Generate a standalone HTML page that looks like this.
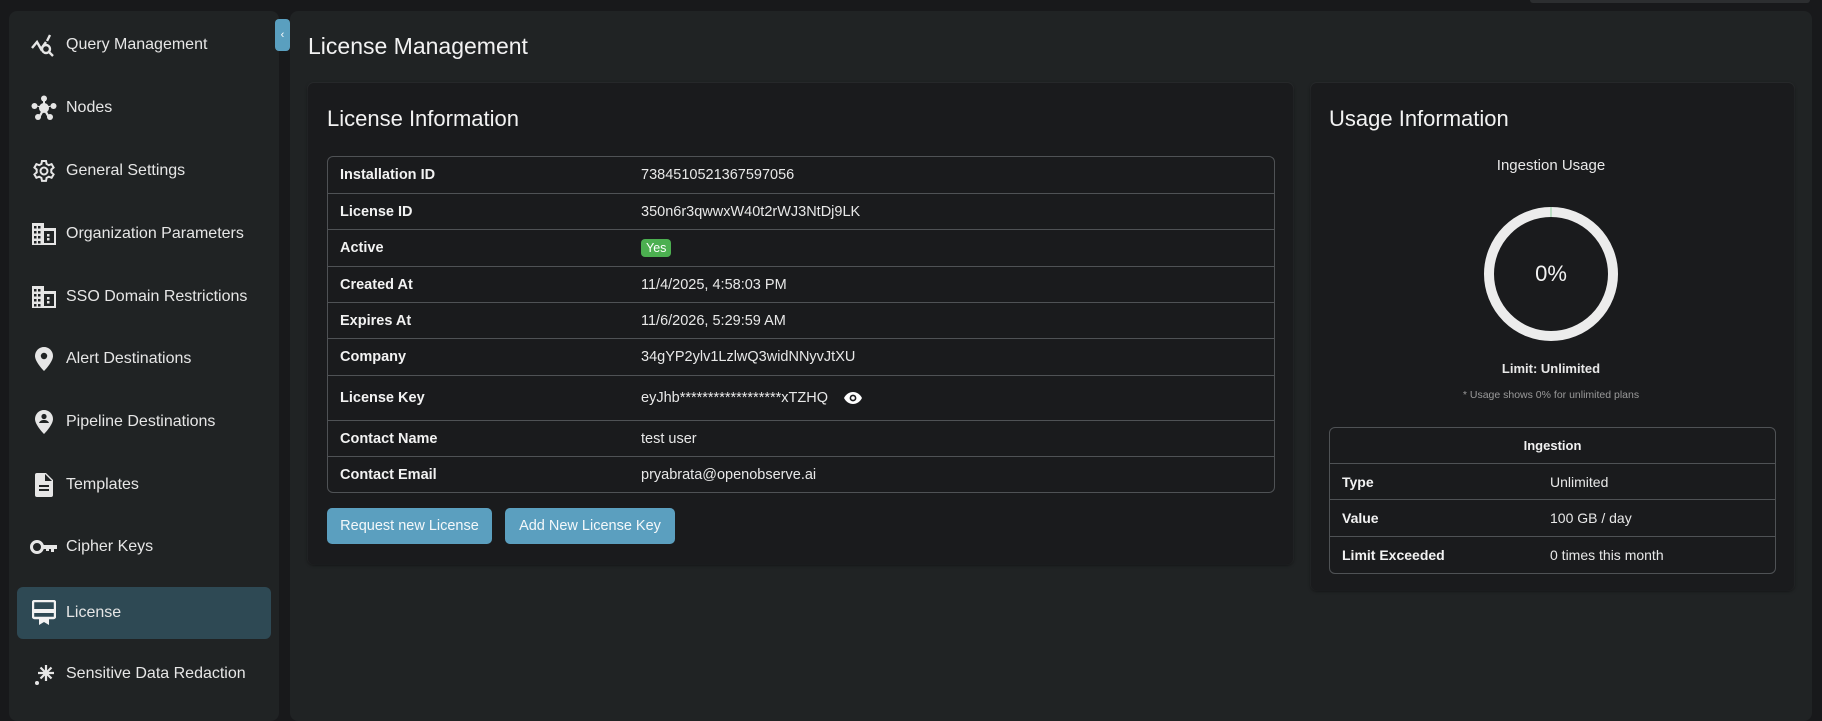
<!DOCTYPE html>
<html><head><meta charset="utf-8"><style>
*{box-sizing:border-box;margin:0;padding:0}
body{width:1822px;height:714px;background:#18191b;font-family:"Liberation Sans",sans-serif;color:#e8e8e8;position:relative;overflow:hidden}
.abs{position:absolute}
.side{left:9px;top:11px;width:270px;height:710px;background:#202324;border-radius:8px}
.item{position:absolute;left:8px;width:254px;height:52px;display:flex;align-items:center;font-size:16px;color:#e6e6e6}
.item .ic{width:30px;height:30px;margin-left:12px;margin-right:7px;display:flex;align-items:center;justify-content:center}
.item.act{background:#2e4954;border-radius:6px}
.main{left:290px;top:11px;width:1522px;height:710px;background:#202324;border-radius:8px}
.card{background:#1a1b1d;border-radius:6px;box-shadow:0 1px 3px rgba(0,0,0,.6),0 0 0 1px #2b2d2f}
table{border-collapse:separate;border-spacing:0;border:1px solid #4f5255;border-radius:6px;width:100%;font-size:14.5px}
td{border-top:1px solid #4f5255;padding:0 12px}
tr:first-child td{border-top:none}
td.l{font-weight:bold;color:#f2f2f2}
.btn{position:absolute;top:508px;height:36px;background:#5b9fbf;color:#f4f8fa;border-radius:5px;font-size:14.5px;display:flex;align-items:center;justify-content:center}
</style></head><body>
<div class="abs" style="left:1530px;top:0;width:280px;height:3px;background:#2c2e30;border-radius:0 0 4px 4px"></div>
<div class="abs side">
 <div class="item" style="top:8px"><div class="ic"><svg width="28" height="24" viewBox="0 0 28 24" fill="none" stroke="#e6e6e6" stroke-width="2.4"><path d="M2 15l5-6 4 7 5-7"/><path d="M20 2l-3 6"/><circle cx="16" cy="16" r="4"/><path d="M19 19l4 4"/></svg></div>Query Management</div>
 <div class="item" style="top:71px"><div class="ic"><svg width="26" height="26" viewBox="0 0 26 26" fill="#e6e6e6"><circle cx="13" cy="13" r="5"/><circle cx="13" cy="3.5" r="3"/><circle cx="3.5" cy="11" r="3"/><circle cx="22.5" cy="11" r="3"/><circle cx="7" cy="22" r="3"/><circle cx="19" cy="22" r="3"/><path d="M12 3h2v8h-2zM3 10l10 2-1 2zM23 10l-10 2 1 2zM7 22l5-9 2 1-5 9zM19 22l-5-9-2 1 5 9z"/></svg></div>Nodes</div>
 <div class="item" style="top:134px"><div class="ic"><svg width="24" height="24" viewBox="0 0 24 24" fill="none" stroke="#e6e6e6" stroke-width="2"><circle cx="12" cy="12" r="3.5"/><path d="M10 2h4l.6 3 2.2 1.2 2.8-1.1 2 3.4-2.3 2v2.9l2.3 2-2 3.4-2.8-1.1-2.2 1.2-.6 3h-4l-.6-3-2.2-1.2-2.8 1.1-2-3.4 2.3-2v-2.9l-2.3-2 2-3.4 2.8 1.1L9.4 5z"/></svg></div>General Settings</div>
 <div class="item" style="top:197px"><div class="ic"><svg width="24" height="22" viewBox="0 0 24 22" fill="#e6e6e6"><path d="M0 0h12v5h12v17H0z"/><g fill="#202324"><rect x="2" y="3" width="2.5" height="2.5"/><rect x="6" y="3" width="2.5" height="2.5"/><rect x="2" y="8" width="2.5" height="2.5"/><rect x="6" y="8" width="2.5" height="2.5"/><rect x="2" y="13" width="2.5" height="2.5"/><rect x="6" y="13" width="2.5" height="2.5"/><rect x="2" y="18" width="2.5" height="2.5"/><rect x="6" y="18" width="2.5" height="2.5"/><rect x="12" y="8" width="10" height="12"/></g><rect x="15" y="11" width="2.5" height="2.5"/><rect x="15" y="15" width="2.5" height="2.5"/></svg></div>Organization Parameters</div>
 <div class="item" style="top:260px"><div class="ic"><svg width="24" height="22" viewBox="0 0 24 22" fill="#e6e6e6"><path d="M0 0h12v5h12v17H0z"/><g fill="#202324"><rect x="2" y="3" width="2.5" height="2.5"/><rect x="6" y="3" width="2.5" height="2.5"/><rect x="2" y="8" width="2.5" height="2.5"/><rect x="6" y="8" width="2.5" height="2.5"/><rect x="2" y="13" width="2.5" height="2.5"/><rect x="6" y="13" width="2.5" height="2.5"/><rect x="2" y="18" width="2.5" height="2.5"/><rect x="6" y="18" width="2.5" height="2.5"/><rect x="12" y="8" width="10" height="12"/></g><rect x="15" y="11" width="2.5" height="2.5"/><rect x="15" y="15" width="2.5" height="2.5"/></svg></div>SSO Domain Restrictions</div>
 <div class="item" style="top:322px"><div class="ic"><svg width="18" height="24" viewBox="0 0 18 24"><path d="M9 0C4 0 0 4 0 9c0 6 9 15 9 15s9-9 9-15c0-5-4-9-9-9z" fill="#e6e6e6"/><circle cx="9" cy="9" r="3.2" fill="#202324"/></svg></div>Alert Destinations</div>
 <div class="item" style="top:385px"><div class="ic"><svg width="18" height="24" viewBox="0 0 18 24"><path d="M9 0C4 0 0 4 0 9c0 6 9 15 9 15s9-9 9-15c0-5-4-9-9-9z" fill="#e6e6e6"/><circle cx="9" cy="6.5" r="2.6" fill="#202324"/><path d="M4 13c1-2.5 3-3 5-3s4 .5 5 3z" fill="#202324"/></svg></div>Pipeline Destinations</div>
 <div class="item" style="top:448px"><div class="ic"><svg width="18" height="24" viewBox="0 0 18 24"><path d="M0 2a2 2 0 012-2h9l7 7v15a2 2 0 01-2 2H2a2 2 0 01-2-2z" fill="#e6e6e6"/><path d="M10 1v7h7" fill="#202324"/><rect x="4" y="12" width="10" height="2" fill="#202324"/><rect x="4" y="16" width="10" height="2" fill="#202324"/></svg></div>Templates</div>
 <div class="item" style="top:510px"><div class="ic"><svg width="28" height="16" viewBox="0 0 28 16"><circle cx="7" cy="8" r="5.5" fill="none" stroke="#e6e6e6" stroke-width="3"/><path d="M12 6h15v4h-3v3h-3v-3h-2v2h-3v-2h-4z" fill="#e6e6e6"/></svg></div>Cipher Keys</div>
 <div class="item act" style="top:576px"><div class="ic"><svg width="24" height="26" viewBox="0 0 24 26"><rect x="1" y="1" width="22" height="17" rx="1.5" fill="none" stroke="#f2f2f2" stroke-width="2.4"/><rect x="2" y="9" width="20" height="4" fill="#f2f2f2"/><path d="M7 18v7l5-3 5 3v-7z" fill="#f2f2f2"/></svg></div>License</div>
 <div class="item" style="top:637px"><div class="ic"><svg width="24" height="26" viewBox="0 0 24 26"><circle cx="5" cy="22" r="2" fill="#e6e6e6"/><g stroke="#e6e6e6" stroke-width="2.2"><path d="M14 4v16M6 12h16M8.5 6.5l11 11M19.5 6.5l-11 11"/></g></svg></div>Sensitive Data Redaction</div>
</div>
<div class="abs" style="left:275px;top:19px;width:15px;height:32px;background:#5a9fbf;border-radius:4px;color:#fff;font-size:11px;display:flex;align-items:center;justify-content:center">&#8249;</div>
<div class="abs main"></div>
<div class="abs" style="left:308px;top:33px;font-size:23px;color:#f2f2f2">License Management</div>
<div class="abs card" style="left:308px;top:83px;width:985px;height:481px"></div>
<div class="abs" style="left:327px;top:106px;font-size:22px;color:#f2f2f2">License Information</div>
<div class="abs" style="left:327px;top:156px;width:948px">
<table>
<tr style="height:36px"><td class="l" style="width:313px">Installation ID</td><td style="padding-left:0">7384510521367597056</td></tr>
<tr style="height:36px"><td class="l">License ID</td><td style="padding-left:0">350n6r3qwwxW40t2rWJ3NtDj9LK</td></tr>
<tr style="height:37px"><td class="l">Active</td><td style="padding-left:0"><span style="background:#4caf50;color:#fff;font-size:12.5px;padding:2px 5px;border-radius:4px">Yes</span></td></tr>
<tr style="height:36px"><td class="l">Created At</td><td style="padding-left:0">11/4/2025, 4:58:03 PM</td></tr>
<tr style="height:36px"><td class="l">Expires At</td><td style="padding-left:0">11/6/2026, 5:29:59 AM</td></tr>
<tr style="height:37px"><td class="l">Company</td><td style="padding-left:0">34gYP2ylv1LzlwQ3widNNyvJtXU</td></tr>
<tr style="height:45px"><td class="l">License Key</td><td style="padding-left:0">eyJhb******************xTZHQ <svg style="vertical-align:-3px;margin-left:12px" width="18" height="14" viewBox="0 0 18 14"><path d="M0 7c2-4 5.5-6 9-6s7 2 9 6c-2 4-5.5 6-9 6S2 11 0 7z" fill="#fff"/><circle cx="9" cy="7" r="3.4" fill="#1a1b1d"/><circle cx="9" cy="7" r="1.8" fill="#fff"/></svg></td></tr>
<tr style="height:36px"><td class="l">Contact Name</td><td style="padding-left:0">test user</td></tr>
<tr style="height:36px"><td class="l">Contact Email</td><td style="padding-left:0">pryabrata@openobserve.ai</td></tr>
</table></div>
<div class="btn" style="left:327px;width:165px">Request new License</div>
<div class="btn" style="left:505px;width:170px">Add New License Key</div>

<div class="abs card" style="left:1311px;top:83px;width:483px;height:507px"></div>
<div class="abs" style="left:1329px;top:106px;font-size:22px;color:#f2f2f2">Usage Information</div>
<div class="abs" style="left:1451px;top:157px;width:200px;text-align:center;font-size:15px">Ingestion Usage</div>
<svg class="abs" style="left:1484px;top:207px" width="134" height="134"><circle cx="67" cy="67" r="62" fill="none" stroke="#ececec" stroke-width="10"/><line x1="67" y1="0" x2="67" y2="10" stroke="#8fd19e" stroke-width="1"/></svg>
<div class="abs" style="left:1501px;top:261px;width:100px;text-align:center;font-size:22px;color:#f2f2f2">0%</div>
<div class="abs" style="left:1451px;top:361px;width:200px;text-align:center;font-size:13px;font-weight:bold">Limit: Unlimited</div>
<div class="abs" style="left:1401px;top:389px;width:300px;text-align:center;font-size:10.5px;color:#9a9a9a">* Usage shows 0% for unlimited plans</div>
<div class="abs" style="left:1329px;top:427px;width:447px">
<table style="font-size:14px">
<tr style="height:35px"><td colspan="2" class="l" style="text-align:center;font-size:13px">Ingestion</td></tr>
<tr style="height:36px"><td class="l" style="width:208px">Type</td><td>Unlimited</td></tr>
<tr style="height:37px"><td class="l">Value</td><td>100 GB / day</td></tr>
<tr style="height:37px"><td class="l">Limit Exceeded</td><td>0 times this month</td></tr>
</table></div>
</body></html>
